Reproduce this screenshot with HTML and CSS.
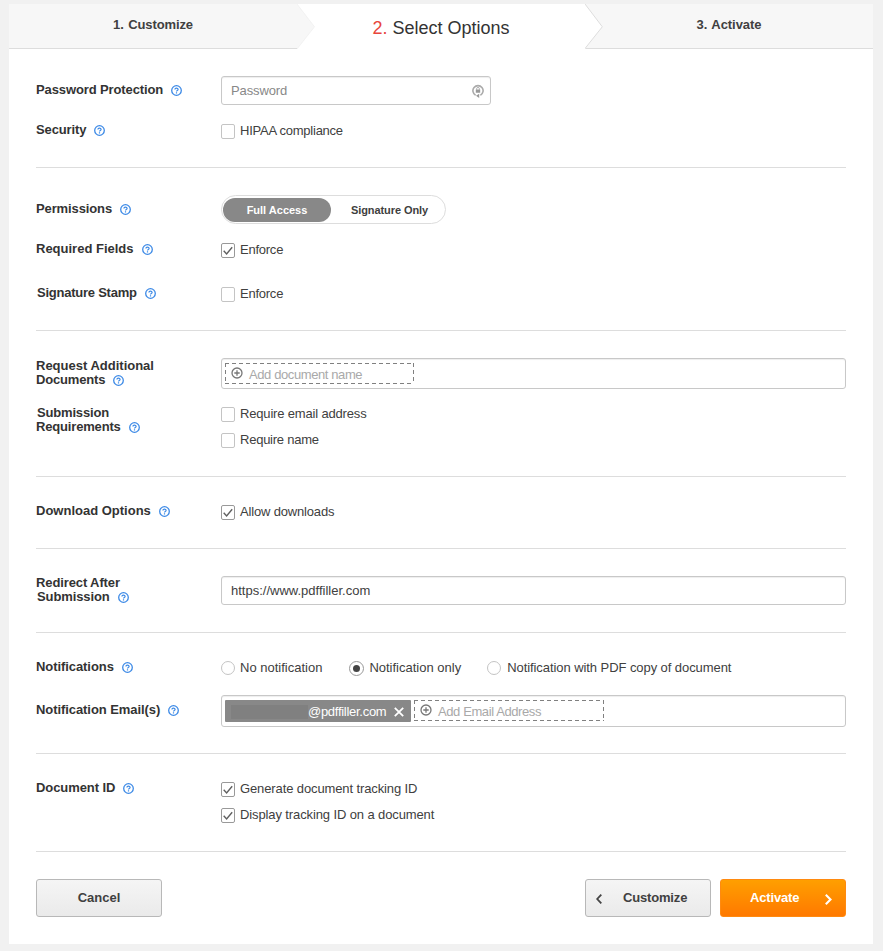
FILE: index.html
```html
<!DOCTYPE html>
<html lang="en">
<head>
<meta charset="utf-8">
<title>Select Options</title>
<link rel="stylesheet" href="styles.css">
</head>
<body>
<svg class="defs" width="0" height="0">
  <symbol id="help" viewBox="0 0 11 11"><circle cx="5.5" cy="5.5" r="4.8" fill="none" stroke="#3d8ae6" stroke-width="1.3"/><path d="M3.9 4.6C3.9 2.7 7.1 2.7 7.1 4.4C7.1 5.5 5.5 5.4 5.5 6.5M5.5 7.3V8.4" fill="none" stroke="#3d8ae6" stroke-width="1.2"/></symbol>
  <symbol id="check" viewBox="0 0 12 13"><path d="M1.7 6.8L4.6 10L10.2 3.2" fill="none" stroke="#606060" stroke-width="1.4"/></symbol>
  <symbol id="plus" viewBox="0 0 12 12"><circle cx="6" cy="6" r="5" fill="none" stroke="#777" stroke-width="1.3"/><path d="M6 3.3V8.7M3.3 6H8.7" stroke="#777" stroke-width="1.3"/></symbol>
</svg>
<main class="card">
  <nav class="steps">
    <div class="step first"><span>1. Customize</span></div>
    <div class="step active">
      <svg class="arrow" width="18" height="45" viewBox="0 0 18 45"><path d="M0 0L17.5 22.8L0 45Z" fill="#f7f7f7"/><path d="M0 0L17.5 22.8L0 45" fill="none" stroke="#eee" stroke-width=".7"/></svg>
      <span><b>2.</b> Select Options</span>
    </div>
    <div class="step last">
      <svg class="arrow" width="18" height="45" viewBox="0 0 18 45"><path d="M0 0L17.3 22.8L0 45Z" fill="#fff"/><path d="M0 0L17.3 22.8L0 44.5" fill="none" stroke="#ddd"/></svg>
      <span>3. Activate</span>
    </div>
  </nav>

  <section class="group g1">
    <div class="row">
      <div class="label low"><span class="snug">Password Protection</span><svg class="help"><use href="#help"/></svg></div>
      <div class="input password"><span class="snug">Password</span>
        <svg width="12" height="14" viewBox="0 0 12 14"><path d="M3.6 11.2A5.1 5.1 0 1 1 8.4 11.2" fill="none" stroke="#aaa" stroke-width="1.6"/><path d="M4.6 5.7V4.8A1.4 1.4 0 0 1 7.4 4.8V5.7" fill="none" stroke="#aaa" stroke-width=".9"/><path d="M3.8 5.5H8.2V8.7H3.8ZM4 11.8L7.2 9.7V14Z" fill="#999"/></svg>
      </div>
    </div>
    <div class="row check-row r-sec">
      <div class="label"><span class="snug">Security</span><svg class="help"><use href="#help"/></svg></div>
      <div class="option"><i class="box"></i><span class="tighter">HIPAA compliance</span></div>
    </div>
  </section>

  <section class="group g2">
    <div class="row">
      <div class="label low"><span class="snug">Permissions</span><svg class="help"><use href="#help"/></svg></div>
      <div class="toggle"><span class="on">Full Access</span><span class="off">Signature Only</span></div>
    </div>
    <div class="row check-row r-req">
      <div class="label"><span>Required Fields</span><svg class="help"><use href="#help"/></svg></div>
      <div class="option"><i class="box on"><svg><use href="#check"/></svg></i><span class="tighter">Enforce</span></div>
    </div>
    <div class="row check-row r-stamp">
      <div class="label"><span class="inset tighter">Signature Stamp</span><svg class="help"><use href="#help"/></svg></div>
      <div class="option"><i class="box"></i><span class="tighter">Enforce</span></div>
    </div>
  </section>

  <section class="group g3">
    <div class="row">
      <div class="label top"><span>Request Additional</span><br><span class="tight">Documents</span><svg class="help"><use href="#help"/></svg></div>
      <div class="input tags docs"><div class="add"><svg><use href="#plus"/></svg><span>Add document name</span></div></div>
    </div>
    <div class="row check-row r-sub">
      <div class="label"><span class="inset tight">Submission</span><br><span class="tight">Requirements</span><svg class="help"><use href="#help"/></svg></div>
      <div class="stack">
        <div class="option"><i class="box"></i><span class="tight">Require email address</span></div>
        <div class="option"><i class="box"></i><span class="tighter">Require name</span></div>
      </div>
    </div>
  </section>

  <section class="group g4">
    <div class="row check-row">
      <div class="label"><span>Download Options</span><svg class="help"><use href="#help"/></svg></div>
      <div class="option"><i class="box on"><svg><use href="#check"/></svg></i><span class="tight">Allow downloads</span></div>
    </div>
  </section>

  <section class="group g5">
    <div class="row">
      <div class="label"><span class="snug">Redirect After</span><br><span class="inset snug">Submission</span><svg class="help"><use href="#help"/></svg></div>
      <div class="input url"><span>https://www.pdffiller.com</span></div>
    </div>
  </section>

  <section class="group g6">
    <div class="row check-row">
      <div class="label"><span class="slight">Notifications</span><svg class="help"><use href="#help"/></svg></div>
      <div class="radios">
        <div class="option"><i class="radio"></i><span>No notification</span></div>
        <div class="option"><i class="radio on"></i><span>Notification only</span></div>
        <div class="option third"><i class="radio"></i><span class="slight">Notification with PDF copy of document</span></div>
      </div>
    </div>
    <div class="row r-mail">
      <div class="label mail"><span class="slight">Notification Email(s)</span><svg class="help"><use href="#help"/></svg></div>
      <div class="input tags mails">
        <div class="chip"><i class="redacted"></i><span>@pdffiller.com</span><svg width="10" height="10" viewBox="0 0 10 10"><path d="M.8 .8L9.2 9.2M9.2 .8L.8 9.2" stroke="#fff" stroke-width="1.8"/></svg></div>
        <div class="add email"><svg><use href="#plus"/></svg><span>Add Email Address</span></div>
      </div>
    </div>
  </section>

  <section class="group g7">
    <div class="row check-row">
      <div class="label"><span class="slight">Document ID</span><svg class="help"><use href="#help"/></svg></div>
      <div class="stack">
        <div class="option"><i class="box on"><svg><use href="#check"/></svg></i><span class="snug">Generate document tracking ID</span></div>
        <div class="option"><i class="box on"><svg><use href="#check"/></svg></i><span class="snug">Display tracking ID on a document</span></div>
      </div>
    </div>
  </section>

  <footer class="actions">
    <div class="btn cancel"><span>Cancel</span></div>
    <div class="btn back"><svg width="6" height="10" viewBox="0 0 6 10"><path d="M5.3 .6L1.2 5L5.3 9.4" fill="none" stroke="#444" stroke-width="1.8"/></svg><span class="tight">Customize</span></div>
    <div class="btn primary"><span class="tight">Activate</span><svg width="7" height="11" viewBox="0 0 7 11"><path d="M.8 .8L5.5 5.5L.8 10.2" fill="none" stroke="#fff" stroke-width="2.1"/></svg></div>
  </footer>
</main>
</body>
</html>
```
FILE: styles.css
```css
* { box-sizing: border-box; }
body { margin: 0; padding-top: 4px; height: 951px; background: #f1f1f1; font: 13px/14px "Liberation Sans", Arial, sans-serif; color: #404040; overflow: hidden; }
svg { display: block; flex: none; }
.defs { position: absolute; }
span { white-space: nowrap; }
.slight { letter-spacing: -.07px; }
.snug { letter-spacing: -.115px; }
.tight { letter-spacing: -.17px; }
.tighter { letter-spacing: -.24px; }
.card { width: 864px; height: 940px; margin-left: 9px; background: #fff; }

.steps { display: flex; height: 45px; }
.step { position: relative; display: flex; justify-content: center; background: #f7f7f7; border-bottom: 1px solid #ddd; font-weight: bold; padding-top: 14px; }
.step.first { width: 288px; word-spacing: 1px; letter-spacing: -.1px; }
.step.active { width: 288px; background: #fff; border-color: #fff; font-size: 18px; line-height: 20px; font-weight: normal; color: #333; }
.step.active b { font-weight: normal; color: #e8453c; }
.step.last { width: 288px; word-spacing: 1px; letter-spacing: -.05px; }
.arrow { position: absolute; left: 0; top: 0; }

.group { margin: 0 27px; border-bottom: 1px solid #ddd; padding-top: 27px; }
.g1 { height: 119px; }
.g2 { height: 163px; }
.g3 { height: 146px; }
.g4 { height: 72px; padding-top: 28px; }
.g5 { height: 84px; }
.g6 { height: 121px; padding-top: 28px; }
.g7 { height: 98px; padding-top: 28px; }
.row { display: grid; grid-template-columns: 185px 1fr; align-items: start; }
.label { font-weight: bold; color: #333; }
.label .inset { margin-left: 1px; }
.label.low { padding-top: 7px; }
.label.top { padding-top: 1px; }
.help { display: inline-block; width: 11px; height: 11px; margin: -2px 0 -3px 8px; vertical-align: 1px; }
.check-row .label { margin-top: -1px; }
.r-sec { margin-top: 19px; }
.r-req { margin-top: 19px; }
.r-stamp { margin-top: 29px; }
.r-sub { margin-top: 18px; }
.r-mail { margin-top: 19px; }
.label.mail { padding-top: 8px; }

.option { display: flex; height: 15px; gap: 5px; line-height: 14px; }
.option.third { gap: 6px; margin-left: -1px; }
.box { width: 14px; height: 15px; border: 1px solid #c4c4c4; border-radius: 2px; background: #fff; }
.box.on { border-color: #999; }
.box svg { width: 12px; height: 13px; }
.radio { width: 14px; height: 14px; border: 1px solid #c4c4c4; border-radius: 50%; display: grid; place-items: center; }
.radio.on { width: 15px; height: 15px; border-color: #999; }
.radio.on::after { content: ""; width: 7px; height: 7px; border-radius: 50%; background: #444; }
.stack { display: grid; gap: 11px; }
.radios { display: flex; gap: 27px; }

.input { display: flex; align-items: center; height: 29px; border: 1px solid #c8c8c8; border-radius: 3px; box-shadow: inset 0 1px 1px #eee; }
.password { width: 270px; justify-content: space-between; padding: 0 6px 0 9px; color: #888; }
.url { padding-left: 9px; }
.tags { align-items: flex-start; padding: 4px 3px; gap: 3px; }
.docs { height: 31px; }
.mails { height: 32px; }
.add {
  --h: repeating-linear-gradient(90deg, #808080 0 4px, transparent 4px 7px);
  --v: repeating-linear-gradient(#808080 0 4px, transparent 4px 7px);
  display: flex; width: 189px; height: 21px; padding-left: 6px; gap: 6px; color: #a9a9a9; line-height: 24px; letter-spacing: -.4px;
  background: var(--h) top / 100% 1px no-repeat, var(--h) bottom / 100% 1px no-repeat, var(--v) left / 1px 100% no-repeat, var(--v) right / 1px 100% no-repeat;
}
.add.email { width: 190px; }
.add svg { width: 12px; height: 12px; margin-top: 4px; }
.chip { display: flex; align-items: center; width: 186px; height: 22px; border-radius: 1px; background: #888; color: #fff; padding: 1px 0 0 6px; letter-spacing: -.28px; }
.redacted { width: 77px; height: 14px; background: #808080; }
.chip svg { margin-left: 8px; }

.toggle { display: flex; width: 225px; height: 29px; padding: 2px 1px; border: 1px solid #ddd; border-radius: 15px; font-size: 11px; font-weight: bold; line-height: 24px; text-align: center; }
.toggle .on { flex: none; width: 108px; height: 24px; border-radius: 12px; background: #888; color: #fff; }
.toggle .off { flex: none; width: 117px; letter-spacing: -.08px; }

.actions { display: flex; padding: 27px 27px 0; }
.btn { display: flex; justify-content: center; width: 126px; height: 38px; padding-top: 10px; border: 1px solid #b8b8b8; border-radius: 3px; background: linear-gradient(#f5f5f5, #eaeaea); font-weight: bold; line-height: 15px; }
.back { margin-left: auto; justify-content: flex-start; padding-left: 10px; gap: 21px; }
.back svg { margin-top: 4px; }
.primary { margin-left: 9px; justify-content: flex-start; padding-left: 29px; gap: 26px; border-color: #ff8a10; background: linear-gradient(#ffa000, #ff7800) border-box; color: #fff; }
.primary svg { margin-top: 4px; }
```
